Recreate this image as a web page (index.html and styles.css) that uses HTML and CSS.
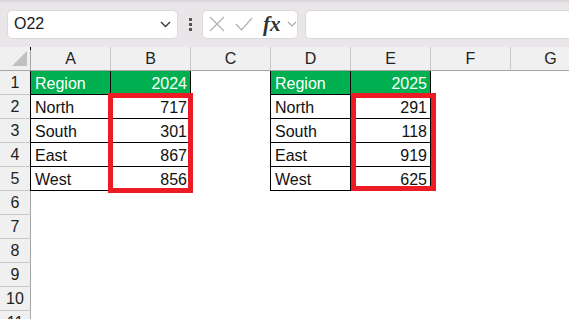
FILE: index.html
```html
<!DOCTYPE html>
<html lang="en">
<head>
  <meta charset="UTF-8">
  <title>Sheet</title>
  <link rel="stylesheet" href="styles.css">
</head>
<body>
  <div class="topbar">
    <div class="name_box">
      <span class="name_text">O22</span>
      <svg class="name_arrow" width="11" height="7" viewBox="0 0 11 7"><polyline points="1,1 5.5,5.5 10,1" fill="none" stroke="#333" stroke-width="1.3"/></svg>
    </div>
    <div class="dots"><i></i><i></i><i></i></div>
    <div class="fx_box">
      <svg width="16" height="16" viewBox="0 0 16 16"><path d="M1 1 L15 15 M15 1 L1 15" stroke="#b4b4b4" stroke-width="1.3" fill="none"/></svg>
      <svg class="check" width="18" height="14" viewBox="0 0 18 14"><polyline points="1,7 6.5,13 17,1" fill="none" stroke="#b4b4b4" stroke-width="1.3"/></svg>
      <span class="fx">fx</span>
      <svg width="10" height="6" viewBox="0 0 10 6"><polyline points="1,1 5,5 9,1" fill="none" stroke="#a8a8a8" stroke-width="1.1"/></svg>
    </div>
    <div class="formula"></div>
  </div>

  <div class="sheet">
    <div class="corner"></div>
    <div class="col">A</div><div class="col">B</div><div class="col">C</div><div class="col">D</div><div class="col">E</div><div class="col">F</div><div class="col">G</div>

    <div class="row">1</div>
    <div class="cell t first hd">Region</div><div class="cell t hd num">2024</div><div class="cell"></div>
    <div class="cell t first hd">Region</div><div class="cell t hd num">2025</div><div class="cell"></div><div class="cell"></div>

    <div class="row">2</div>
    <div class="cell t first">North</div><div class="cell t num">717</div><div class="cell"></div>
    <div class="cell t first">North</div><div class="cell t num">291</div><div class="cell"></div><div class="cell"></div>

    <div class="row">3</div>
    <div class="cell t first">South</div><div class="cell t num">301</div><div class="cell"></div>
    <div class="cell t first">South</div><div class="cell t num">118</div><div class="cell"></div><div class="cell"></div>

    <div class="row">4</div>
    <div class="cell t first">East</div><div class="cell t num">867</div><div class="cell"></div>
    <div class="cell t first">East</div><div class="cell t num">919</div><div class="cell"></div><div class="cell"></div>

    <div class="row">5</div>
    <div class="cell t first">West</div><div class="cell t num">856</div><div class="cell"></div>
    <div class="cell t first">West</div><div class="cell t num">625</div><div class="cell"></div><div class="cell"></div>

    <div class="row">6</div><div class="cell"></div><div class="cell"></div><div class="cell"></div><div class="cell"></div><div class="cell"></div><div class="cell"></div><div class="cell"></div>
    <div class="row">7</div><div class="cell"></div><div class="cell"></div><div class="cell"></div><div class="cell"></div><div class="cell"></div><div class="cell"></div><div class="cell"></div>
    <div class="row">8</div><div class="cell"></div><div class="cell"></div><div class="cell"></div><div class="cell"></div><div class="cell"></div><div class="cell"></div><div class="cell"></div>
    <div class="row">9</div><div class="cell"></div><div class="cell"></div><div class="cell"></div><div class="cell"></div><div class="cell"></div><div class="cell"></div><div class="cell"></div>
    <div class="row">10</div><div class="cell"></div><div class="cell"></div><div class="cell"></div><div class="cell"></div><div class="cell"></div><div class="cell"></div><div class="cell"></div>
    <div class="row">11</div><div class="cell"></div><div class="cell"></div><div class="cell"></div><div class="cell"></div><div class="cell"></div><div class="cell"></div><div class="cell"></div>

    <!-- red highlight boxes drawn over the value columns -->
    <div class="mark mark_b"></div>
    <div class="mark mark_e"></div>
  </div>
</body>
</html>
```

FILE: styles.css
```css
*,*:before,*:after{
  box-sizing: border-box;
  margin: 0;
  padding: 0;
}
html,body{
  height: 100%;
  overflow: hidden;
  background: #fff;
  font-family: "Liberation Sans", Arial, sans-serif;
  color: #111;
}

/* formula bar */
.topbar{
  display: flex;
  align-items: center;
  height: 47px;
  padding: 1px 0 0 7px;
  background: #e9e5e8;
  box-shadow: inset 0 3px 3px -2px rgba(0,0,0,0.12);
}
.name_box{
  display: flex;
  align-items: center;
  justify-content: space-between;
  width: 171px;
  height: 29px;
  padding: 0 6px 0 6px;
  background: #fff;
  border: 1px solid #dcd8db;
  border-radius: 5px;
}
.name_text{
  font-size: 16px;
  color: #1a1a1a;
}
.dots{
  display: flex;
  flex-direction: column;
  gap: 2px;
  margin: 0 10px 0 11px;
}
.dots i{
  display: block;
  width: 3px;
  height: 3px;
  background: #555;
}
.fx_box{
  display: flex;
  align-items: center;
  width: 96px;
  height: 29px;
  padding-left: 6px;
  background: #fff;
  border: 1px solid #dcd8db;
  border-radius: 5px;
}
.fx_box .check{
  margin: 0 10px 0 10px;
}
.fx{
  font-family: "Liberation Serif", "Times New Roman", serif;
  font-style: italic;
  font-weight: bold;
  font-size: 21px;
  color: #333;
  margin-right: 6px;
  line-height: 1;
}
.formula{
  flex: 1;
  height: 29px;
  margin-left: 7px;
  background: #fff;
  border: 1px solid #dcd8db;
  border-right: none;
  border-radius: 5px 0 0 5px;
}

/* grid */
.sheet{
  position: relative;
  display: grid;
  grid-template-columns: 31px repeat(7, 80px);
  grid-auto-rows: 24px;
  font-size: 16px;
  line-height: 24px;
}
.corner,.col,.row{
  background: #f0f0f0;
  color: #222;
  text-align: center;
}
.corner{
  position: relative;
  border-right: 1px solid #a6a6a6;
  border-bottom: 1px solid #a6a6a6;
}
.corner:before{
  content: '';
  position: absolute;
  right: 3px;
  bottom: 4px;
  border-left: 15px solid transparent;
  border-bottom: 15px solid #c0c0c0;
}
.corner:after{
  content: '';
  position: absolute;
  right: -1px;
  top: 0;
  width: 1px;
  height: 3px;
  background: #000;
}
.col{
  border-right: 1px solid #c8c8c8;
  border-bottom: 1px solid #a6a6a6;
}
.row{
  border-right: 1px solid #a6a6a6;
  border-bottom: 1px solid #c8c8c8;
}
.cell{
  padding: 1px 3px 0 4px;
  white-space: nowrap;
  overflow: hidden;
}
.t{
  border-right: 1px solid #000;
  border-bottom: 1px solid #000;
}
.first{
  box-shadow: -1px 0 0 #000;
  overflow: visible;
}
.hd{
  background: #00b050;
  color: #fff;
}
.num{
  text-align: right;
}
.mark{
  position: absolute;
  top: 46px;
  width: 85px;
  border: 5px solid #ed1c24;
}
.mark_b{
  left: 108px;
  height: 100px;
}
.mark_e{
  left: 351px;
  height: 98px;
}
```
